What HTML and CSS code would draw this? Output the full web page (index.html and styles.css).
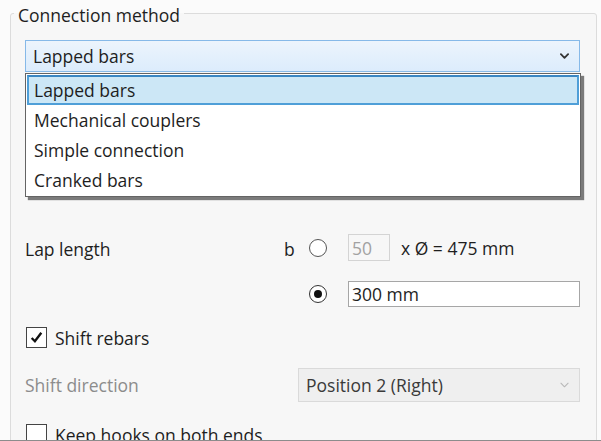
FILE: index.html
```html
<!DOCTYPE html>
<html lang="en">
<head>
  <meta charset="UTF-8" />
  <title>Connection method</title>
  <link rel="stylesheet" href="styles.css">
</head>
<body>
  <div class="page">
    <fieldset class="group">
      <legend>Connection method</legend>

      <div class="combo-wrap">
        <div class="combo open">
          <span>Lapped bars</span>
          <svg class="chevron" viewBox="0 0 10 6">
            <path d="M1 1l4 4 4-4" />
          </svg>
        </div>
        <ul class="dropdown">
          <li class="selected">Lapped bars</li>
          <li>Mechanical couplers</li>
          <li>Simple connection</li>
          <li>Cranked bars</li>
        </ul>
      </div>

      <div class="lap-grid">
        <div class="label">Lap length</div>
        <div class="sym">b</div>
        <span class="radio"></span>
        <div class="factor">
          <input class="field small" type="text" value="50" disabled>
          <span>x Ø = 475 mm</span>
        </div>

        <div></div>
        <div></div>
        <span class="radio checked"></span>
        <input class="field" type="text" value="300 mm">
      </div>

      <label class="check-row">
        <span class="checkbox">
          <svg viewBox="0 0 14 14"><path d="M2.5 7.5l3 3 6-8" /></svg>
        </span>
        Shift rebars
      </label>

      <div class="shift-row">
        <div class="label muted">Shift direction</div>
        <div class="combo disabled">
          <span>Position 2 (Right)</span>
          <svg class="chevron" viewBox="0 0 10 6">
            <path d="M1 1l4 4 4-4" />
          </svg>
        </div>
      </div>

      <label class="check-row hooks">
        <span class="checkbox"></span>
        Keep hooks on both ends
      </label>
    </fieldset>
  </div>
</body>
</html>
```

FILE: styles.css
```css
body {
  margin: 0;
  background-color: #fbfbfb;
  color: #1e1e1e;
  font-family: 'Open Sans', sans-serif;
  font-size: 17.5px;
}
.page {
  height: 440px;
  overflow: hidden;
  border-bottom: 1px solid #8c8c8c;
}
.group {
  margin: 0 4px 0 10px;
  padding: 0 16px 0 14px;
  border: 1px solid #dcdcdc;
  border-radius: 3px;
  background-color: #f7f7f7;
  min-height: 500px;
}
.group legend {
  margin-left: -11px;
  padding: 4px 4px 0;
  line-height: 22px;
}

/* combo boxes */
.combo-wrap {
  position: relative;
  margin-top: 14px;
}
.combo {
  height: 32px;
  box-sizing: border-box;
  display: flex;
  align-items: center;
  justify-content: space-between;
  padding: 0 10px 0 7px;
  border: 1px solid #cfcfcf;
}
.combo.open {
  border-color: #86b9e8;
  background: linear-gradient(#ecf4fc, #dcecfc);
}
.chevron {
  width: 9px;
  height: 6px;
  fill: none;
  stroke: #333;
  stroke-width: 2;
  stroke-linecap: round;
  stroke-linejoin: round;
}
.combo.disabled {
  height: 34px;
  flex: 1;
  background-color: #efefef;
  border-color: #dadada;
  color: #3a3a3a;
}
.combo.disabled .chevron {
  stroke: #b8b8b8;
  stroke-width: 1.2;
}

.dropdown {
  position: absolute;
  top: 33px;
  left: 0;
  width: 556px;
  box-sizing: border-box;
  margin: 0;
  padding: 1px;
  list-style: none;
  background-color: #fff;
  border: 1px solid #646464;
  box-shadow: 3px 3px 1px rgba(0, 0, 0, 0.5);
  z-index: 2;
}
.dropdown li {
  height: 30px;
  line-height: 31px;
  padding-left: 7px;
  box-sizing: border-box;
}
.dropdown li.selected {
  background-color: #cce7f6;
  border: 2px solid #4f9fd8;
  border-top-color: #3a86c2;
  line-height: 27px;
  padding-left: 5px;
}

/* lap length */
.lap-grid {
  display: grid;
  grid-template-columns: 259px 25px 39px 1fr;
  grid-template-rows: 27px 26px;
  row-gap: 20px;
  align-items: center;
  margin-top: 162px;
}
.lap-grid .label, .sym {
  padding-top: 2px;
}
.radio {
  width: 16px;
  height: 16px;
  border: 1px solid #555;
  border-radius: 50%;
  background-color: #fff;
  display: flex;
  align-items: center;
  justify-content: center;
}
.radio.checked {
  border-color: #333;
}
.radio.checked::after {
  content: "";
  width: 8px;
  height: 8px;
  border-radius: 50%;
  background-color: #111;
}
.factor {
  display: flex;
  align-items: center;
  gap: 11px;
  height: 27px;
}
.field {
  height: 26px;
  box-sizing: border-box;
  margin: 0;
  padding: 0 3px;
  border: 1px solid #a6a6a6;
  background-color: #fff;
  font-family: inherit;
  font-size: 17.5px;
  color: #1e1e1e;
}
.field.small {
  width: 42px;
  height: 27px;
  border-color: #d4d4d4;
  background-color: #f7f7f7;
  color: #a2a2a2;
}

/* check rows */
.check-row {
  display: flex;
  align-items: center;
  gap: 8px;
  margin-top: 20px;
  height: 21px;
  margin-left: 1px;
}
.checkbox {
  width: 19px;
  height: 19px;
  border: 1px solid #444;
  background-color: #fff;
  display: flex;
  align-items: center;
  justify-content: center;
}
.checkbox svg {
  width: 15px;
  height: 15px;
  fill: none;
  stroke: #111;
  stroke-width: 2.2;
}
.hooks {
  margin-top: 22px;
}

.shift-row {
  display: flex;
  align-items: center;
  margin-top: 20px;
}
.shift-row .label {
  width: 273px;
}
.muted {
  color: #8c8c8c;
}
```
